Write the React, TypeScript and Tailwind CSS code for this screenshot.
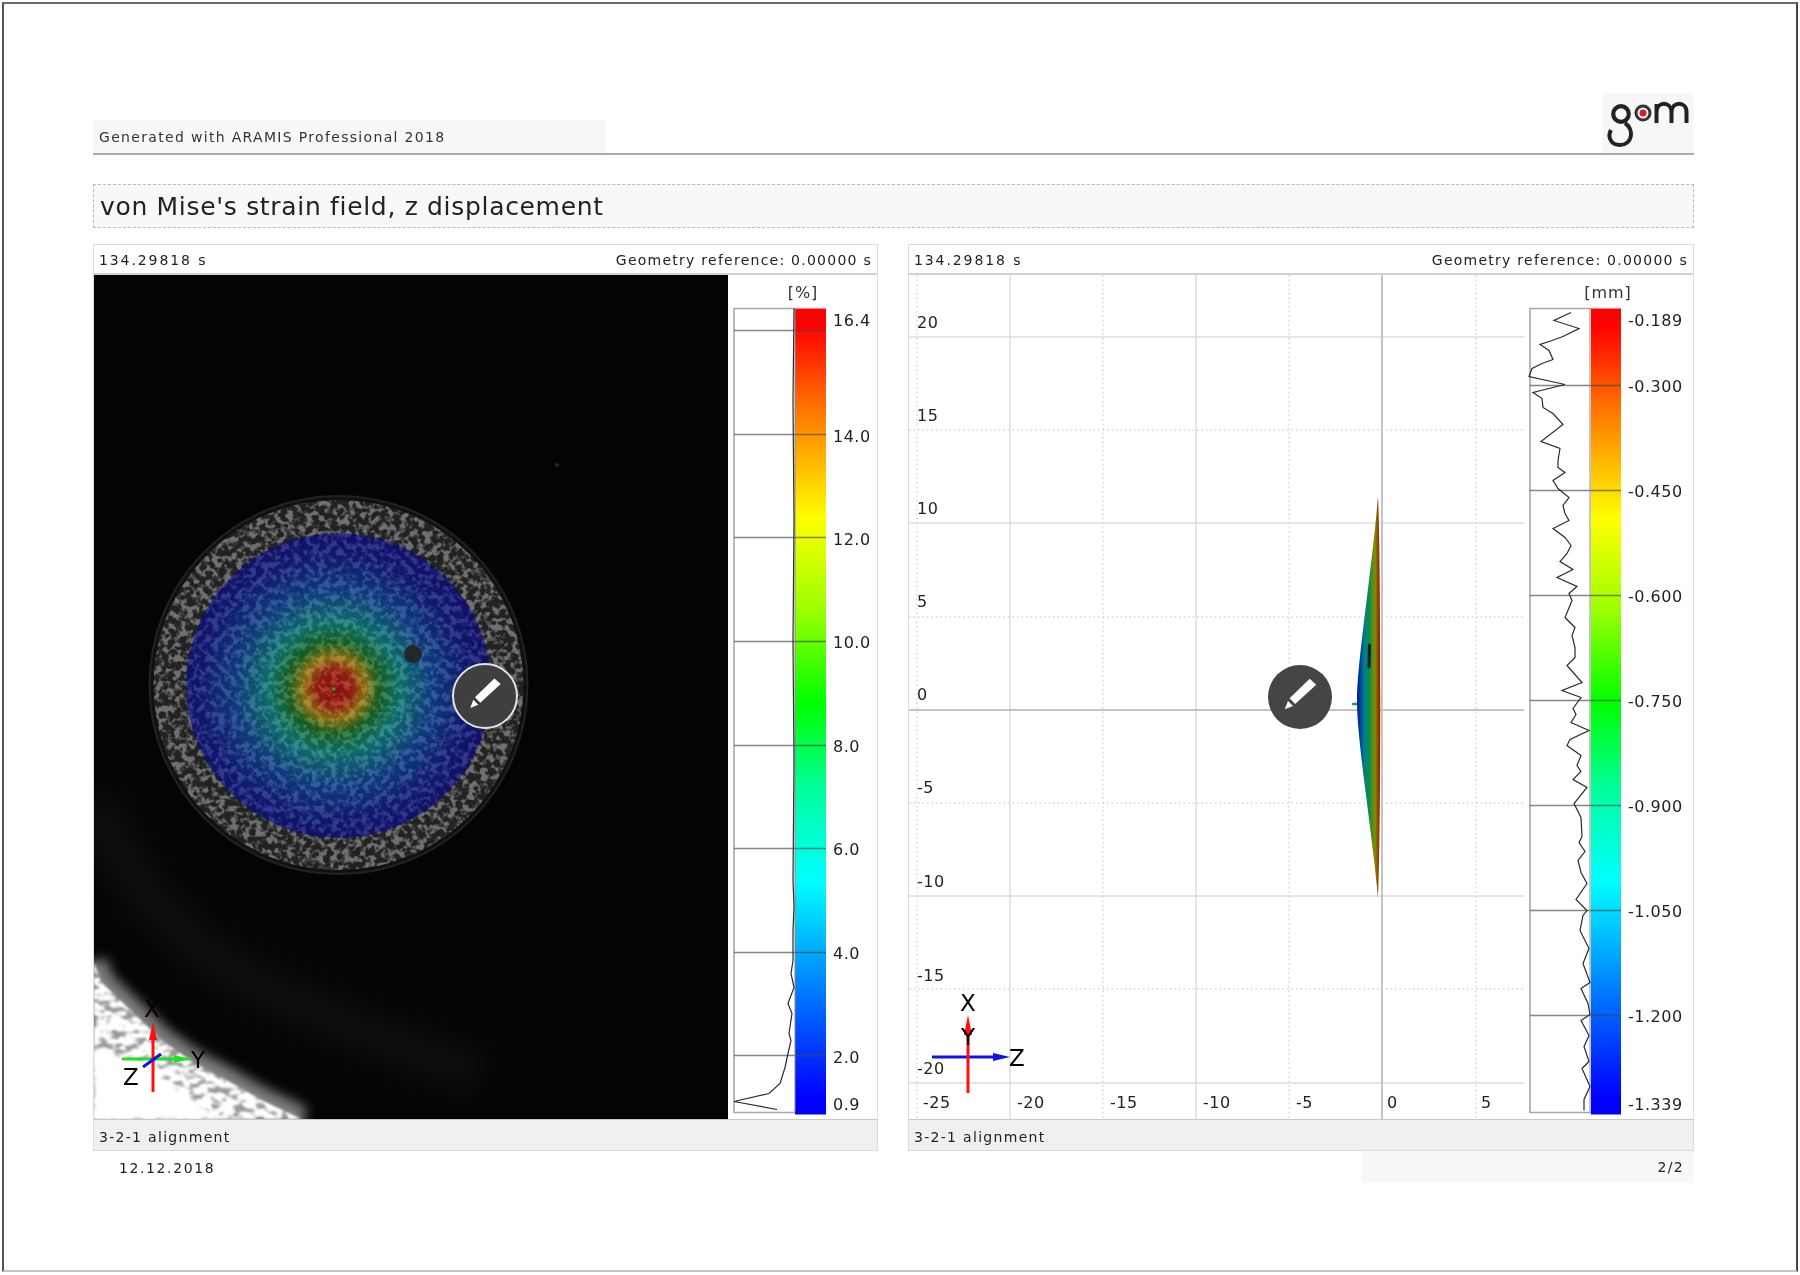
const pct = {
  id: "pct",
  view: "728 274.5 149 844",
  box: [734, 795],
  bar: [795, 826],
  labelX: 833,
  unit: "[%]",
  unitX: 803,
  ticks: [330, 434, 537, 641, 745, 848, 952, 1055],
  labels: [
    ["16.4", 320],
    ["14.0", 436],
    ["12.0", 539],
    ["10.0", 642],
    ["8.0", 746],
    ["6.0", 849],
    ["4.0", 953],
    ["2.0", 1057],
    ["0.9", 1104],
  ] as [string, number][],
  curve:
    "794,308 793,400 794,520 793,640 794,760 793,880 794,906 793,930 793,960 791,973 794,987 788,1003 792,1013 789,1033 791,1040 788,1053 785,1067 780,1083 769,1093 734,1101 777,1109",
}

const mm = {
  id: "mm",
  view: "1524 274.5 169 844",
  box: [1530, 1590],
  bar: [1591, 1621],
  labelX: 1628,
  unit: "[mm]",
  unitX: 1608,
  ticks: [385, 490, 595, 700, 805, 910, 1015],
  labels: [
    ["-0.189", 320],
    ["-0.300", 386],
    ["-0.450", 491],
    ["-0.600", 596],
    ["-0.750", 701],
    ["-0.900", 806],
    ["-1.050", 911],
    ["-1.200", 1016],
    ["-1.339", 1104],
  ] as [string, number][],
  curve:
    "1571,312 1554,320 1579,328 1563,336 1552,340 1540,344 1549,350 1553,359 1542,363 1532,368 1529,376 1565,384 1533,392 1542,398 1543,407 1553,413 1563,424 1541,441 1560,448 1558,460 1558,467 1565,472 1553,480 1558,488 1569,497 1563,505 1565,513 1569,520 1553,528 1565,537 1571,545 1567,553 1560,561 1573,569 1557,577 1577,586 1569,593 1572,600 1565,617 1575,627 1572,635 1575,647 1575,657 1567,665 1582,682 1562,690 1581,697 1573,708 1576,714 1571,722 1589,730 1570,739 1567,745 1581,755 1577,765 1581,771 1573,779 1587,787 1574,803 1581,817 1582,836 1579,842 1585,851 1578,860 1581,872 1587,883 1576,899 1587,910 1583,915 1580,930 1589,948 1583,963 1590,982 1581,988 1588,1003 1590,1014 1581,1020 1589,1035 1584,1046 1589,1061 1582,1068 1590,1086 1584,1099 1584,1110",
}

function Legend({ cfg }: { cfg: typeof pct }) {
  const [bx0, bx1] = cfg.box
  const [x0, x1] = cfg.bar
  return (
    <svg viewBox={cfg.view} className="h-full w-full block">
      <defs>
        <linearGradient id={cfg.id} x1="0" y1="0" x2="0" y2="1">
          <stop offset="0.02" stopColor="#ff0000" />
          <stop offset="0.13" stopColor="#ff7a00" />
          <stop offset="0.26" stopColor="#ffff00" />
          <stop offset="0.37" stopColor="#a0ff00" />
          <stop offset="0.49" stopColor="#00ff00" />
          <stop offset="0.6" stopColor="#00ffa0" />
          <stop offset="0.71" stopColor="#00ffff" />
          <stop offset="0.85" stopColor="#0078ff" />
          <stop offset="0.98" stopColor="#0000ff" />
        </linearGradient>
      </defs>
      <text x={cfg.unitX} y={292} textAnchor="middle" dominantBaseline="central" className="fill-[#333] text-[16px] tracking-[1px]">
        {cfg.unit}
      </text>
      <path d={`M${x0} 308H${bx0}V1112H${x0}`} fill="none" stroke="#a8a8a8" strokeWidth="1.6" />
      <rect x={x0} y={308} width={x1 - x0} height={806} fill={`url(#${cfg.id})`} />
      {cfg.ticks.map((y) => (
        <line key={y} x1={bx0} x2={x1} y1={y} y2={y} stroke="#444" strokeOpacity="0.65" strokeWidth="1.3" />
      ))}
      <line x1={bx1} x2={bx1} y1={308} y2={1112} stroke="#888" strokeWidth="1" />
      <polyline points={cfg.curve} fill="none" stroke="#2a2a2a" strokeWidth="1.2" />
      {cfg.labels.map(([t, y]) => (
        <text key={t} x={cfg.labelX} y={y} dominantBaseline="central" className="fill-[#222] text-[16px] tracking-[0.5px]">
          {t}
        </text>
      ))}
    </svg>
  )
}

function Pencil() {
  return (
    <svg viewBox="-33 -33 66 66" className="h-full w-full">
      <polygon points="10,-18.7 16.7,-12.7 -5,7.3 -10.7,1.3" fill="#fff" />
      <polygon points="-15.7,12.7 -12.4,4 -7.2,9.4" fill="#fff" />
    </svg>
  )
}

function Axis({ x, y, label }: { x: number; y: number; label: string }) {
  return (
    <text x={x} y={y} textAnchor="middle" dominantBaseline="central" className="fill-black text-[23px]">
      {label}
    </text>
  )
}

function Photo() {
  const edge = "M94,963 L101,982 L127,1007 L161,1040 L194,1063 L221,1077 L261,1100 L301,1119 L94,1119 Z"
  return (
    <svg viewBox="94 275 634 844" className="block h-full w-full">
      <defs>
        <filter id="speckle" filterUnits="userSpaceOnUse" x="94" y="275" width="634" height="844" colorInterpolationFilters="sRGB">
          <feTurbulence type="fractalNoise" baseFrequency="0.16" numOctaves="2" seed="7" result="n" />
          <feColorMatrix in="n" type="matrix" values="0 0 0 0 0  0 0 0 0 0  0 0 0 0 0  5 0 0 0 -2.2" result="m" />
          <feComposite in="SourceGraphic" in2="m" operator="in" />
          <feGaussianBlur stdDeviation="0.6" />
        </filter>
        <filter id="streak" filterUnits="userSpaceOnUse" x="94" y="900" width="300" height="219" colorInterpolationFilters="sRGB">
          <feTurbulence type="fractalNoise" baseFrequency="0.09 0.16" numOctaves="2" seed="3" result="n" />
          <feColorMatrix in="n" type="matrix" values="0 0 0 0 0  0 0 0 0 0  0 0 0 0 0  6 0 0 0 -2.1" result="m" />
          <feComposite in="SourceGraphic" in2="m" operator="in" />
          <feGaussianBlur stdDeviation="0.8" />
        </filter>
        <filter id="soft" x="-30%" y="-30%" width="160%" height="160%">
          <feGaussianBlur stdDeviation="2" />
        </filter>
        <filter id="glow" x="-30%" y="-30%" width="160%" height="160%">
          <feGaussianBlur stdDeviation="6" />
        </filter>
        <filter id="haze" x="-30%" y="-30%" width="160%" height="160%">
          <feGaussianBlur stdDeviation="14" />
        </filter>
        <radialGradient id="strain" gradientUnits="userSpaceOnUse" cx="334" cy="688" r="156">
          <stop offset="0" stopColor="#d80000" />
          <stop offset="0.11" stopColor="#e01800" />
          <stop offset="0.2" stopColor="#d8a800" />
          <stop offset="0.29" stopColor="#108a20" />
          <stop offset="0.42" stopColor="#00a8a0" />
          <stop offset="0.62" stopColor="#0050c0" />
          <stop offset="0.85" stopColor="#0010a8" />
          <stop offset="1" stopColor="#000098" />
        </radialGradient>
      </defs>
      <rect x="94" y="275" width="634" height="844" fill="#040404" />

      {/* faint part edges around the specimen */}
      <path d="M94,800 C130,890 190,950 260,985 S380,1040 480,1075" fill="none" stroke="#fff" strokeOpacity="0.04" strokeWidth="46" filter="url(#haze)" />
      <circle cx="557" cy="465" r="2" fill="#2a2a2a" />

      {/* bright speckled edge, bottom left */}
      <path d={edge} fill="none" stroke="#7c7c7c" strokeWidth="26" filter="url(#glow)" />
      <path d={edge} fill="#9a9a9a" filter="url(#soft)" />
      <path d={edge} fill="#fff" filter="url(#streak)" />
      <path d="M94,1047 L107,1053 L151,1063 L161,1077 L194,1100 L221,1119 L94,1119 Z" fill="#fff" filter="url(#soft)" />

      {/* specimen */}
      <circle cx="338.5" cy="685" r="189" fill="#111" stroke="#222" strokeWidth="2" />
      <circle cx="338.5" cy="685" r="185" fill="#222" />
      <circle cx="338.5" cy="685" r="185" fill="#707070" filter="url(#speckle)" />
      <circle cx="338.5" cy="685.5" r="152.5" fill="url(#strain)" fillOpacity="0.55" />
      <circle cx="413" cy="654" r="9" fill="#222" fillOpacity="0.9" />
      <circle cx="334" cy="689" r="1.5" fill="#18b060" />

      {/* coordinate axes */}
      <line x1="122" x2="190" y1="1059" y2="1059" stroke="#22e022" strokeWidth="3" />
      <polygon points="190,1059 174,1055 174,1063" fill="#22e022" />
      <line x1="153" x2="153" y1="1032" y2="1092" stroke="#ff1010" strokeWidth="3" />
      <polygon points="153,1022 149,1040 157,1040" fill="#ff1010" />
      <line x1="143" x2="161" y1="1067" y2="1054" stroke="#1010f0" strokeWidth="3" />
      <Axis x={152} y={1009} label="X" />
      <Axis x={198} y={1060} label="Y" />
      <Axis x={131} y={1077} label="Z" />
    </svg>
  )
}

const solidX = [1010, 1196]
const dottedX = [917, 1103, 1289, 1476]
const solidY = [336, 522, 895, 1082]
const dottedY = [429, 616, 802, 988]
const yLabels: [string, number][] = [
  ["20", 321],
  ["15", 414],
  ["10", 507],
  ["5", 600],
  ["0", 693],
  ["-5", 786],
  ["-10", 880],
  ["-15", 974],
  ["-20", 1067],
]
const xLabels: [string, number][] = [
  ["-25", 923],
  ["-20", 1017],
  ["-15", 1110],
  ["-10", 1203],
  ["-5", 1296],
  ["0", 1387],
  ["5", 1481],
]

function Chart() {
  return (
    <svg viewBox="909 274 615 844" className="block h-full w-full">
      <defs>
        <linearGradient id="lens" x1="0" y1="0" x2="1" y2="0">
          <stop offset="0" stopColor="#0010a0" />
          <stop offset="0.3" stopColor="#007a90" />
          <stop offset="0.55" stopColor="#109040" />
          <stop offset="0.78" stopColor="#8a8a00" />
          <stop offset="1" stopColor="#901000" />
        </linearGradient>
      </defs>
      {dottedX.map((x) => (
        <line key={x} x1={x} x2={x} y1={274} y2={1118} stroke="#d4d4d4" strokeWidth="1.4" strokeDasharray="1.5 3" />
      ))}
      {dottedY.map((y) => (
        <line key={y} x1={909} x2={1524} y1={y} y2={y} stroke="#d4d4d4" strokeWidth="1.4" strokeDasharray="1.5 3" />
      ))}
      {solidX.map((x) => (
        <line key={x} x1={x} x2={x} y1={274} y2={1118} stroke="#dcdcdc" strokeWidth="1.5" />
      ))}
      {solidY.map((y) => (
        <line key={y} x1={909} x2={1524} y1={y} y2={y} stroke="#dcdcdc" strokeWidth="1.5" />
      ))}
      <line x1={1382} x2={1382} y1={274} y2={1118} stroke="#c4c4c4" strokeWidth="2" />
      <line x1={909} x2={1524} y1={709} y2={709} stroke="#c4c4c4" strokeWidth="2" />

      <path d="M1378,495 C1372,570 1357,660 1357,700 C1357,740 1372,830 1378,897 C1381,830 1381,560 1378,495 Z" fill="url(#lens)" />
      <line x1="1352" x2="1357" y1="703" y2="703" stroke="#10a860" strokeWidth="2.5" />
      <line x1="1369.5" x2="1369" y1="644" y2="666" stroke="#0a1a30" strokeWidth="3" strokeLinecap="round" />

      {yLabels.map(([t, y]) => (
        <text key={t} x={917} y={y} dominantBaseline="central" className="fill-[#222] text-[16px] tracking-[0.5px]">
          {t}
        </text>
      ))}
      {xLabels.map(([t, x]) => (
        <text key={t} x={x} y={1101} dominantBaseline="central" className="fill-[#222] text-[16px] tracking-[0.5px]">
          {t}
        </text>
      ))}

      <line x1="932" x2="1000" y1="1056" y2="1056" stroke="#1010f0" strokeWidth="3" />
      <polygon points="1010,1056 993,1052 993,1060" fill="#1010f0" />
      <line x1="968" x2="968" y1="1030" y2="1092" stroke="#ff1010" strokeWidth="3" />
      <polygon points="968,1014 964,1034 972,1034" fill="#ff1010" />
      <Axis x={968} y={1002} label="X" />
      <Axis x={968} y={1036} label="Y" />
      <Axis x={1017} y={1057} label="Z" />
    </svg>
  )
}

function Panel({ children }: { children: React.ReactNode }) {
  return (
    <div className="flex h-[907px] flex-col border border-[#dcdcdc]">
      <div className="flex h-[28px] items-center justify-between px-[5px] pt-[3px] text-[14px] text-[#222]">
        <span className="tracking-[1.9px]">134.29818 s</span>
        <span className="tracking-[1.25px]">Geometry reference: 0.00000 s</span>
      </div>
      <div className="border-t-2 border-[#d2d2d2]" />
      <div className="relative h-[844px]">{children}</div>
      <div className="flex h-[31px] items-center border-t border-[#c8c8c8] bg-[#f0f0f0] px-[5px] pt-[4px] text-[14px] tracking-[1.3px] text-[#222]">
        3-2-1 alignment
      </div>
    </div>
  )
}

export default function App() {
  return (
    <div className="h-[1275px] w-[1800px] bg-white p-[2px] pb-[3px] font-['DejaVu_Sans',sans-serif]">
      <div className="h-full border-2 border-t-[#6a6a6a] border-r-[#444] border-b-[#c4c4c4] border-l-[#555] pt-[89px] pr-[102px] pl-[89px] blur-[0.35px]">
        {/* report header */}
        <div className="flex h-[62px] items-end justify-between border-b-2 border-[#ababab]">
          <div className="flex h-[33px] w-[513px] items-center bg-[#f8f8f8] pt-[2px] pl-[6px] text-[14px] tracking-[1.32px] text-[#333]">
            Generated with ARAMIS Professional 2018
          </div>
          <div className="h-[60px] w-[91px] bg-[#f7f7f7]">
            <svg viewBox="1603 93 91 60" className="block h-full w-full">
              <circle cx="1621" cy="114" r="7.8" fill="none" stroke="#222" strokeWidth="4.2" />
              <path d="M1625,123 C1635,130 1632,145 1620,145 C1611,145 1607,137 1611,130" fill="none" stroke="#222" strokeWidth="4" />
              <circle cx="1643" cy="113" r="7" fill="none" stroke="#333" strokeWidth="3" />
              <circle cx="1643" cy="113" r="3.5" fill="#d01c2c" />
              <path d="M1656.5,123V104M1656.5,112 C1657,101 1671,101 1671.5,112V123M1671.5,112 C1672,101 1686.5,101 1686.5,112V123" fill="none" stroke="#222" strokeWidth="4" />
            </svg>
          </div>
        </div>

        <div className="mt-[29px] flex h-[44px] items-center border border-dashed border-[#bcbcbc] bg-[#f8f8f8] pt-[2px] pl-[6px] text-[25px] tracking-[0.68px] text-[#222]">
          von Mise's strain field, z displacement
        </div>

        <div className="mt-[16px] grid grid-cols-[785px_786px] gap-[30px]">
          <Panel>
            <div className="grid h-full grid-cols-[634px_149px]">
              <Photo />
              <Legend cfg={pct} />
            </div>
            <div className="absolute top-[388px] left-[358px] h-[66px] w-[66px] rounded-full border-2 border-[#e4e4e4] bg-[#3f3f42]">
              <Pencil />
            </div>
          </Panel>
          <Panel>
            <div className="grid h-full grid-cols-[615px_169px]">
              <Chart />
              <Legend cfg={mm} />
            </div>
            <div className="absolute top-[390px] left-[359px] h-[64px] w-[64px] rounded-full bg-[#454545]">
              <Pencil />
            </div>
          </Panel>
        </div>

        {/* report footer */}
        <div className="flex h-[32px] justify-between text-[14px] tracking-[1.3px] text-[#222]">
          <div className="flex items-center pt-[2px] pl-[26px] tracking-[1.6px]">12.12.2018</div>
          <div className="flex w-[333px] items-center justify-end bg-[#f8f8f8] pr-[10px]">2/2</div>
        </div>
      </div>
    </div>
  )
}
